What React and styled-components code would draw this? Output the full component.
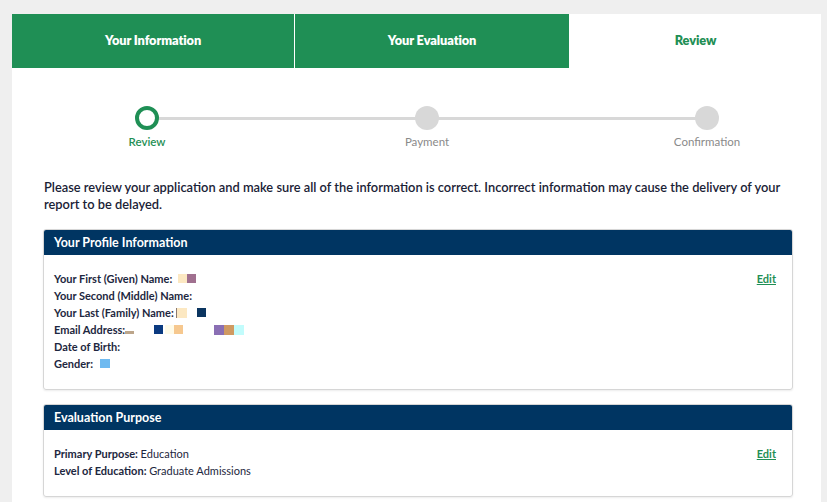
import React from 'react'
import styled, { createGlobalStyle } from 'styled-components'

const Global = createGlobalStyle`
  body {
    margin: 0;
    background: #efefef;
    font-family: Lato, "Open Sans", sans-serif;
    color: #1d2740;
  }
`

const GREEN = '#1f8f55'
const NAVY = '#003562'

const Page = styled.div`
  margin: 14px 6px 0 12px;
  background: #fff;
  min-height: 488px;
`

const Tabs = styled.div`
  display: flex;
  height: 54px;
  gap: 1px;
  background: #fff;
`

const Tab = styled.div`
  flex: ${p => (p.$w ? `0 0 ${p.$w}px` : '1')};
  display: flex;
  align-items: center;
  justify-content: center;
  padding-bottom: 3px;
  box-sizing: border-box;
  background: ${p => (p.$active ? '#fff' : GREEN)};
  color: ${p => (p.$active ? GREEN : '#fff')};
  font-weight: 800;
  font-size: 12.8px;
  letter-spacing: -0.1px;
`

const Stepper = styled.div`
  position: relative;
  display: flex;
  justify-content: space-between;
  margin: 38px 74px 0 95px;

  &::before {
    content: '';
    position: absolute;
    left: 40px;
    right: 40px;
    top: 11px;
    height: 3px;
    background: #d8d8d8;
  }
`

const Step = styled.div`
  position: relative;
  width: 80px;
  display: flex;
  flex-direction: column;
  align-items: center;
  gap: 5px;
`

const Dot = styled.div`
  width: 24px;
  height: 24px;
  box-sizing: border-box;
  border-radius: 50%;
  background: ${p => (p.$active ? '#fff' : '#d8d8d8')};
  border: ${p => (p.$active ? `4px solid ${GREEN}` : 'none')};
`

const StepLabel = styled.div`
  font-size: 11.5px;
  color: ${p => (p.$active ? GREEN : '#8a8a8a')};
  font-weight: ${p => (p.$active ? 600 : 400)};
`

const Content = styled.div`
  padding: 31px 28px 0 31px;
`

const Intro = styled.p`
  margin: 0 0 16px 1px;
  font-size: 12.85px;
  line-height: 17px;
  font-weight: 600;
  color: #1a2236;
`

const Panel = styled.section`
  border: 1px solid #d6d6d6;
  border-radius: 3px;
  box-shadow: 0 1px 2px rgba(0, 0, 0, 0.08);
  margin-bottom: 14px;
  overflow: hidden;
`

const PanelHead = styled.h3`
  margin: 0;
  height: 25px;
  display: flex;
  align-items: center;
  padding: 0 10px;
  background: ${NAVY};
  color: #fff;
  font-size: 12.5px;
  font-weight: 700;
`

const PanelBody = styled.div`
  display: flex;
  justify-content: space-between;
  align-items: flex-start;
  padding: 15px 16px 17px 10px;
`

const Rows = styled.div`
  display: flex;
  flex-direction: column;
`

const Row = styled.div`
  font-size: 11px;
  line-height: 17px;
  color: #1d2740;
  display: flex;
  align-items: center;
  white-space: pre;
`

const Label = styled.span`
  font-weight: 700;
`

const Value = styled.span`
  font-weight: 400;
`

const Swatch = styled.span`
  display: inline-block;
  width: ${p => p.$w || 9}px;
  height: ${p => p.$h || 9}px;
  background: ${p => p.$c};
  margin-left: ${p => p.$ml || 0}px;
  align-self: ${p => (p.$low ? 'flex-end' : 'center')};
  margin-bottom: ${p => (p.$low ? 4 : 0)}px;
`

const Edit = styled.a`
  font-size: 11px;
  font-weight: 700;
  color: ${GREEN};
  text-decoration: underline;
  line-height: 17px;
  cursor: pointer;
`

export default function App() {
  return (
    <>
      <Global />
      <Page>
        <Tabs>
          <Tab $w={282}>Your Information</Tab>
          <Tab $w={274}>Your Evaluation</Tab>
          <Tab $active>Review</Tab>
        </Tabs>

        <Stepper>
          <Step>
            <Dot $active />
            <StepLabel $active>Review</StepLabel>
          </Step>
          <Step>
            <Dot />
            <StepLabel>Payment</StepLabel>
          </Step>
          <Step>
            <Dot />
            <StepLabel>Confirmation</StepLabel>
          </Step>
        </Stepper>

        <Content>
          <Intro>
            Please review your application and make sure all of the information is correct. Incorrect information may cause the delivery of your report to be delayed.
          </Intro>

          <Panel>
            <PanelHead>Your Profile Information</PanelHead>
            <PanelBody>
              <Rows>
                <Row>
                  <Label>Your First (Given) Name: </Label>
                  <Swatch $c="#fce8c2" $ml={3} />
                  <Swatch $c="#a0708f" />
                </Row>
                <Row>
                  <Label>Your Second (Middle) Name:</Label>
                </Row>
                <Row>
                  <Label>Your Last (Family) Name:</Label>
                  <Swatch $c="#8a7a70" $w={1} $h={10} $ml={2} />
                  <Swatch $c="#fce8c2" $w={10} $h={10} />
                  <Swatch $c="#0b3560" $ml={10} />
                </Row>
                <Row>
                  <Label>Email Address:</Label>
                  <Swatch $c="#bca58a" $w={9} $h={3} $low />
                  <Swatch $c="#0b3a80" $ml={20} />
                  <Swatch $c="#fffbe8" $ml={2} />
                  <Swatch $c="#f6c88f" />
                  <Swatch $c="#8a6fb4" $ml={31} $w={10} $h={10} />
                  <Swatch $c="#d09a62" $w={10} $h={10} />
                  <Swatch $c="#c2fcfc" $w={10} $h={10} />
                </Row>
                <Row>
                  <Label>Date of Birth:</Label>
                </Row>
                <Row>
                  <Label>Gender: </Label>
                  <Swatch $c="#6fbaf0" $w={10} $h={9} $ml={4} />
                </Row>
              </Rows>
              <Edit>Edit</Edit>
            </PanelBody>
          </Panel>

          <Panel>
            <PanelHead>Evaluation Purpose</PanelHead>
            <PanelBody>
              <Rows>
                <Row>
                  <Label>Primary Purpose: </Label>
                  <Value>Education</Value>
                </Row>
                <Row>
                  <Label>Level of Education: </Label>
                  <Value>Graduate Admissions</Value>
                </Row>
              </Rows>
              <Edit>Edit</Edit>
            </PanelBody>
          </Panel>
        </Content>
      </Page>
    </>
  )
}
